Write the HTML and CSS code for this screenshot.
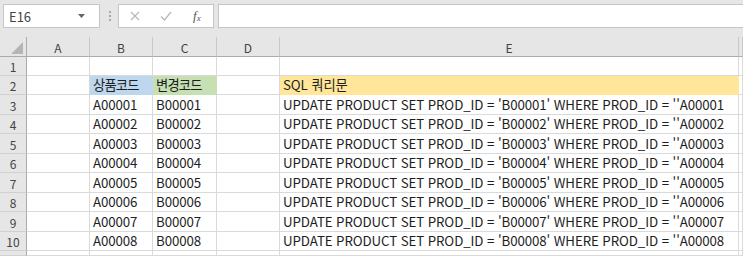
FILE: index.html
```html
<!DOCTYPE html>
<html lang="ko">
<head>
    <meta charset="UTF-8">
    <title>Excel - SQL 쿼리문</title>
    <link rel="stylesheet" href="styles.css">
</head>
<body>
    <div class="toolbar">
        <div class="name-box">
            <span>E16</span>
            <svg class="caret" width="7" height="4" viewBox="0 0 7 4"><path d="M0 0H7L3.5 4Z" fill="#666"/></svg>
        </div>
        <div class="grip">
            <i></i><i></i><i></i>
        </div>
        <div class="fx-buttons">
            <svg class="icon" width="10" height="10" viewBox="0 0 10 10"><path d="M1 1L9 9M9 1L1 9" stroke="#b8b8b8" stroke-width="1.2" fill="none"/></svg>
            <svg class="icon" width="12" height="10" viewBox="0 0 12 10"><path d="M1 5.5L4.5 9L11 1" stroke="#b8b8b8" stroke-width="1.3" fill="none"/></svg>
            <span class="fx">f<sub>x</sub></span>
        </div>
        <div class="formula-input"></div>
    </div>

    <div class="sheet" id="sheet"></div>

    <script>
        const rowHeights = [19, 19, 20, 19, 20, 19, 20, 19, 20, 19, 5];
        const columns = ['A', 'B', 'C', 'D', 'E', ''];

        function sqlFor(n) {
            const id = String(n).padStart(5, '0');
            return `UPDATE PRODUCT SET PROD_ID = 'B${id}' WHERE PROD_ID = ''A${id}`;
        }

        function cellsFor(row) {
            if (row === 2) {
                return [
                    { text: '' },
                    { text: '상품코드', cls: 'fill-blue hangul' },
                    { text: '변경코드', cls: 'fill-green hangul' },
                    { text: '' },
                    { text: 'SQL 쿼리문', cls: 'fill-yellow' },
                    { text: '' }
                ];
            }
            if (row >= 3 && row <= 10) {
                const n = row - 2;
                const id = String(n).padStart(5, '0');
                return [
                    { text: '' },
                    { text: 'A' + id },
                    { text: 'B' + id },
                    { text: '' },
                    { text: sqlFor(n) },
                    { text: '' }
                ];
            }
            return columns.map(() => ({ text: '' }));
        }

        function buildSheet() {
            const sheet = document.getElementById('sheet');
            sheet.style.gridTemplateRows = '20px ' + rowHeights.map(h => h + 'px').join(' ');

            let html = `<div class="corner"><svg width="27" height="20" viewBox="0 0 27 20"><path d="M11 17H23V5Z" fill="#b5b5b5"/></svg></div>`;
            html += columns.map(c => `<div class="col-head">${c}</div>`).join('');

            rowHeights.forEach((h, i) => {
                const row = i + 1;
                const label = h > 10 ? row : '';
                html += `<div class="row-head">${label}</div>`;
                html += cellsFor(row).map(c => `<div class="cell ${c.cls || ''}">${c.text}</div>`).join('');
            });

            sheet.innerHTML = html;
        }

        buildSheet();
    </script>
</body>
</html>
```

FILE: styles.css
```css
* {
    margin: 0;
    padding: 0;
    box-sizing: border-box;
}

body {
    font-family: "Noto Sans CJK KR", "Noto Sans", sans-serif;
    background: #e6e6e6;
    width: 743px;
    height: 256px;
    overflow: hidden;
}

.toolbar {
    display: flex;
    align-items: flex-start;
    height: 37px;
    padding: 4px 0 0 3px;
}

.name-box {
    display: flex;
    align-items: center;
    justify-content: space-between;
    width: 97px;
    height: 24px;
    background: white;
    border: 1px solid #c6c6c6;
    padding: 0 14px 0 5px;
    font-size: 13px;
    color: #444;
}

.grip {
    width: 18px;
    height: 24px;
    display: flex;
    flex-direction: column;
    align-items: center;
    justify-content: center;
    gap: 2px;
    padding-left: 1px;
}

.grip i {
    width: 2px;
    height: 2px;
    background: #a8a8a8;
}

.fx-buttons {
    display: flex;
    align-items: center;
    width: 96px;
    height: 24px;
    background: white;
    border: 1px solid #c6c6c6;
    padding: 0 0 0 11px;
    gap: 20px;
}

.fx {
    font-family: "Liberation Serif", serif;
    font-style: italic;
    font-size: 13px;
    color: #555;
    margin-left: 1px;
}

.fx sub {
    font-size: 9px;
    vertical-align: -1px;
}

.formula-input {
    flex: 1;
    margin-left: 4px;
    height: 24px;
    background: white;
    border: 1px solid #c6c6c6;
    border-right: none;
}

.sheet {
    display: grid;
    grid-template-columns: 27px 63px 63px 64px 63px 459px 1fr;
}

.corner,
.col-head,
.row-head {
    background: #e6e6e6;
    color: #444;
    font-size: 12px;
}

.corner {
    border-right: 1px solid #ababab;
    border-bottom: 1px solid #ababab;
}

.corner svg {
    display: block;
}

.col-head {
    display: flex;
    align-items: center;
    justify-content: center;
    border-right: 1px solid #c8c8c8;
    border-bottom: 1px solid #ababab;
    padding-top: 1px;
}

.row-head {
    display: flex;
    align-items: center;
    justify-content: center;
    border-right: 1px solid #ababab;
    border-bottom: 1px solid #d0d0d0;
    padding-top: 1px;
}

.cell {
    display: flex;
    align-items: flex-end;
    background: white;
    border-right: 1px solid #dadada;
    border-bottom: 1px solid #dadada;
    padding: 0 0 1px 3px;
    font-size: 13.3px;
    letter-spacing: -0.1px;
    line-height: 17px;
    color: #1e1e1e;
    white-space: nowrap;
    overflow: hidden;
}

.hangul {
    letter-spacing: -0.8px;
}

.fill-blue {
    background: #bdd7ee;
    border-color: #bdd7ee;
}

.fill-green {
    background: #c6e0b4;
    border-color: #c6e0b4;
}

.fill-yellow {
    background: #ffe699;
    border-color: #ffe699;
}
```
